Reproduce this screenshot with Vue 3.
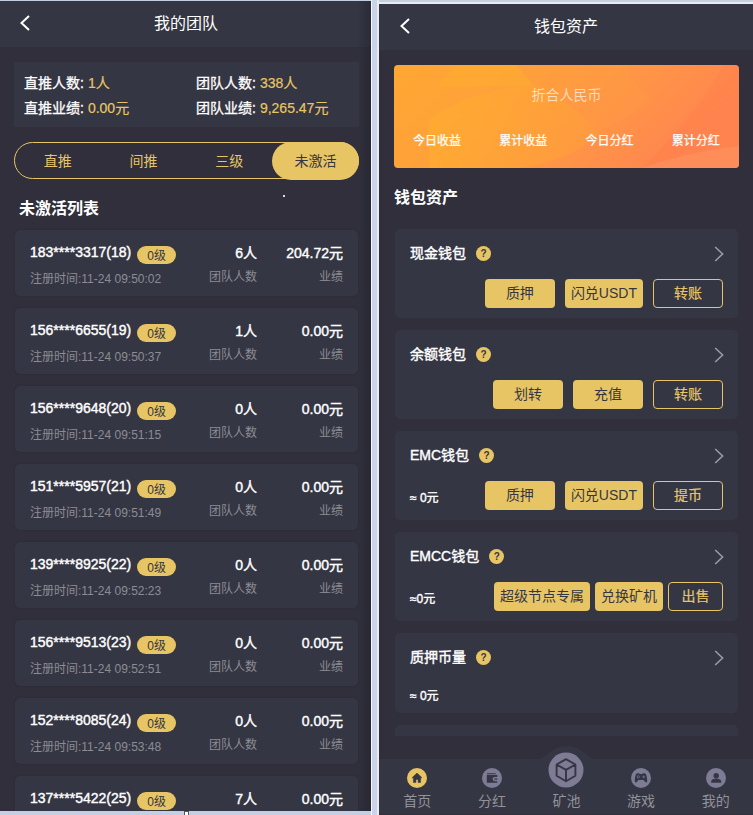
<script setup>
const summary = [
  { label: '直推人数', value: '1人' },
  { label: '团队人数', value: '338人' },
  { label: '直推业绩', value: '0.00元' },
  { label: '团队业绩', value: '9,265.47元' },
]

const tabs = ['直推', '间推', '三级', '未激活']
const activeTab = '未激活'

const members = [
  { id: 18, phone: '183****3317', time: '11-24 09:50:02', team: 6, amount: '204.72' },
  { id: 19, phone: '156****6655', time: '11-24 09:50:37', team: 1, amount: '0.00' },
  { id: 20, phone: '156****9648', time: '11-24 09:51:15', team: 0, amount: '0.00' },
  { id: 21, phone: '151****5957', time: '11-24 09:51:49', team: 0, amount: '0.00' },
  { id: 22, phone: '139****8925', time: '11-24 09:52:23', team: 0, amount: '0.00' },
  { id: 23, phone: '156****9513', time: '11-24 09:52:51', team: 0, amount: '0.00' },
  { id: 24, phone: '152****8085', time: '11-24 09:53:48', team: 0, amount: '0.00' },
  { id: 25, phone: '137****5422', time: '', team: 7, amount: '0.00' },
]

const earnings = ['今日收益', '累计收益', '今日分红', '累计分红']

const wallets = [
  { name: '现金钱包', approx: '', actions: ['质押', '闪兑USDT', '转账'] },
  { name: '余额钱包', approx: '', actions: ['划转', '充值', '转账'] },
  { name: 'EMC钱包', approx: '≈ 0元', actions: ['质押', '闪兑USDT', '提币'] },
  { name: 'EMCC钱包', approx: '≈0元', actions: ['超级节点专属', '兑换矿机', '出售'], tight: true },
  { name: '质押币量', approx: '≈ 0元', actions: [], short: true },
]

const navItems = [
  { key: 'home', label: '首页' },
  { key: 'bonus', label: '分红' },
  { key: 'pool', label: '矿池' },
  { key: 'game', label: '游戏' },
  { key: 'mine', label: '我的' },
]
</script>

<template>
  <main class="board">
    <section class="pane team-pane">
      <header class="bar">
        <svg class="back" width="12" height="18" viewBox="0 0 12 18"><path d="M10 2 2.5 9 10 16" /></svg>
        <h1>我的团队</h1>
      </header>

      <dl class="summary">
        <div v-for="item in summary" :key="item.label">
          <dt>{{ item.label }}:</dt>
          <dd>{{ item.value }}</dd>
        </div>
      </dl>

      <nav class="tabs">
        <span v-for="tab in tabs" :key="tab" :class="['tab', { active: tab === activeTab }]">{{ tab }}</span>
      </nav>

      <div class="list-head">
        <h2>未激活列表</h2>
        <i class="speck"></i>
      </div>

      <div class="member-list">
        <article v-for="member in members" :key="member.id" class="member">
          <div class="who">
            <div class="phone">
              <strong>{{ member.phone }}({{ member.id }})</strong>
              <span class="level">0级</span>
            </div>
            <p v-if="member.time">注册时间:{{ member.time }}</p>
          </div>
          <div class="figure team">
            <strong>{{ member.team }}人</strong>
            <p v-if="member.time">团队人数</p>
          </div>
          <div class="figure amount">
            <strong>{{ member.amount }}元</strong>
            <p v-if="member.time">业绩</p>
          </div>
        </article>
      </div>
    </section>

    <div class="gutter"><i class="handle"></i></div>

    <section class="pane wallet-pane">
      <header class="bar">
        <svg class="back" width="12" height="18" viewBox="0 0 12 18"><path d="M10 2 2.5 9 10 16" /></svg>
        <h1>钱包资产</h1>
      </header>

      <div class="banner">
        <svg class="banner-art" viewBox="0 0 345 103" preserveAspectRatio="none">
          <defs>
            <linearGradient id="base" x1="0" y1="0" x2="1" y2="0.3">
              <stop offset="0" stop-color="#ffa732" />
              <stop offset="0.4" stop-color="#ffa03b" />
              <stop offset="0.75" stop-color="#ff9248" />
              <stop offset="1" stop-color="#ff8550" />
            </linearGradient>
            <linearGradient id="leaf" x1="0" y1="0" x2="1" y2="0">
              <stop offset="0" stop-color="#ffb02c" />
              <stop offset="1" stop-color="#ffa039" />
            </linearGradient>
          </defs>
          <path d="M0 0h345v103H0z" fill="url(#base)" />
          <path d="M44 22Q50 8 62 0h61l16 20Q88 22 44 22z" fill="#ffae2d" opacity=".5" />
          <path d="M35 103V55Q70 28 140 18 180 40 206 68 170 100 120 103z" fill="url(#leaf)" opacity=".5" />
          <path d="M123 0h110q5 20 27 36l-55 32Q180 38 139 20z" fill="#ff9b43" opacity=".3" />
          <path d="M330 0h15v81q-50 5-97 22 50-48 82-103z" fill="#ff7f4c" opacity=".4" />
          <path d="M345 81q-50 5-97 22h97z" fill="#ff8e5c" opacity=".8" />
        </svg>
        <div class="banner-title">折合人民币</div>
        <div class="earnings">
          <span v-for="label in earnings" :key="label">{{ label }}</span>
        </div>
      </div>

      <h2 class="wallet-title">钱包资产</h2>

      <div class="wallet-list">
        <article v-for="wallet in wallets" :key="wallet.name" :class="['wallet', { short: wallet.short }]">
          <div class="wallet-head">
            <strong>{{ wallet.name }}</strong>
            <span class="help">?</span>
            <svg class="more" width="10" height="16" viewBox="0 0 10 16"><path d="M1.2 1 8.6 8l-7.4 7" /></svg>
          </div>
          <div :class="['wallet-foot', { tight: wallet.tight }]">
            <span class="approx">{{ wallet.approx }}</span>
            <span
              v-for="(action, i) in wallet.actions"
              :key="action"
              :class="['btn', { outline: i === wallet.actions.length - 1 }]"
            >{{ action }}</span>
          </div>
        </article>
        <article class="wallet"></article>
      </div>

      <footer class="nav">
        <svg class="hump" width="60" height="15" viewBox="0 0 60 15"><path d="M0 15C10 13 15 1 30 1s20 12 30 14z" /></svg>
        <div v-for="item in navItems" :key="item.key" :class="['nav-item', item.key]">
          <svg v-if="item.key === 'home'" class="icon" viewBox="0 0 20 20">
            <circle class="disc" cx="10" cy="10" r="10" />
            <path class="ink" d="M10 5 5 9.8h1.4v4.7h2.5v-3h2.2v3h2.5V9.8H15z" stroke="#353644" stroke-width=".5" stroke-linejoin="round" />
          </svg>
          <svg v-else-if="item.key === 'bonus'" class="icon" viewBox="0 0 20 20">
            <circle class="disc" cx="10" cy="10" r="10" />
            <path class="ink" d="M5 5.2h8.7v1H5zM4.8 7h10.5v2h-2.6a2 2 0 0 0 0 4.2h2.6v1.5H4.8z" />
            <path class="ink" d="M12.8 10.5h2.5v1.2h-2.5a.6.6 0 0 1 0-1.2z" />
          </svg>
          <svg v-else-if="item.key === 'pool'" class="icon big" viewBox="0 0 36 36">
            <circle class="disc" cx="18" cy="18" r="17.5" />
            <path class="wire" d="M18 7.2 27.4 12.5v11.2L18 29.2 8.6 23.7V12.5zM8.6 12.5 18 17.8l9.4-5.3M18 17.8v11.4" />
          </svg>
          <svg v-else-if="item.key === 'game'" class="icon" viewBox="0 0 20 20">
            <circle class="disc" cx="10" cy="10" r="10" />
            <path class="ink" d="M6.3 5.2h1.6l1 .8h2.2l1-.8h1.6c1.6 0 2.5 4.2 2.5 7.6 0 2.5-1.8 2.3-3.6-.7H7.4c-1.8 3-3.6 3.2-3.6.7 0-3.4.9-7.6 2.5-7.6z" />
            <circle class="disc" cx="7.2" cy="8.9" r="1.4" />
            <circle class="ink" cx="7.2" cy="8.9" r=".8" />
            <path class="disc" d="M12.4 7.6h.7v1h1v.7h-1v1h-.7v-1h-1v-.7h1z" />
          </svg>
          <svg v-else class="icon" viewBox="0 0 20 20">
            <circle class="disc" cx="10" cy="10" r="10" />
            <circle class="ink" cx="10.2" cy="7.7" r="2.7" />
            <path class="ink" d="M5.2 14.8v-1.2c0-2 2-2.6 3.4-2.8h3.2c1.5.2 3.4.8 3.4 2.8v1.2z" />
          </svg>
          <span>{{ item.label }}</span>
        </div>
      </footer>
    </section>
  </main>
</template>

<style>
body { background: #cbd5e7; }
</style>

<style scoped>
.board {
  display: flex;
  width: 753px;
  height: 815px;
  overflow: hidden;
  background: #c3cfe2;
  color: #fff;
  font-family: "Liberation Sans", "Noto Sans CJK SC", sans-serif;
  font-size: 14px;
}
.board * { box-sizing: border-box; }
h1, h2, p, dl, dd { margin: 0; }
strong { font-weight: 400; -webkit-text-stroke: 0.4px currentColor; }
.pane {
  display: flex;
  flex-direction: column;
  overflow: hidden;
  background: #302f3b;
}
.team-pane {
  width: 371px;
  height: 810px;
  margin-top: 1px;
  background: linear-gradient(90deg, transparent 359px, #272834 371px), #302f3b;
}
.bar {
  display: flex;
  align-items: center;
  flex: none;
  height: 46px;
  padding-left: 19px;
  background: #353644;
}
.team-pane .bar { background: linear-gradient(90deg, transparent 357px, #292b38 371px), #353644; }
.back { flex: none; margin-top: -2px; }
.back path { fill: none; stroke: #fff; stroke-width: 2; }
.bar h1 {
  flex: 1;
  padding-right: 32px;
  font-size: 16px;
  font-weight: 400;
  line-height: 24px;
  text-align: center;
}
.team-pane .bar h1 { padding-right: 30px; }

.summary {
  display: grid;
  grid-template-columns: 172px 1fr;
  grid-auto-rows: 25px;
  flex: none;
  width: 345px;
  height: 65px;
  margin: 15px 0 0 14px;
  padding: 9px 10px 0;
  background: #353644;
  line-height: 25px;
}
.summary div { display: flex; gap: 4px; }
.summary dt { -webkit-text-stroke: 0.3px currentColor; }
.summary dd { color: #e7c564; -webkit-text-stroke: 0.2px currentColor; }

.tabs {
  display: flex;
  flex: none;
  width: 345px;
  height: 37px;
  margin: 15px 0 0 14px;
  border: 1px solid #e7c564;
  border-radius: 19px;
}
.tab {
  flex: 1;
  color: #e7c564;
  line-height: 37px;
  text-align: center;
}
.tab.active {
  flex: none;
  width: 87px;
  height: 38px;
  margin: -1px -1px 0 0;
  border-radius: 19px;
  background: #e7c564;
  color: #353644;
  line-height: 39px;
}
.list-head {
  display: flex;
  flex: none;
  height: 51px;
  padding: 18px 0 0 19px;
}
.list-head h2,
.wallet-title {
  font-size: 16px;
  font-weight: 700;
  line-height: 24px;
}
.speck {
  width: 2px;
  height: 2px;
  margin: -2px 0 0 184px;
  background: #ddd;
}

.member-list {
  display: flex;
  flex-direction: column;
  gap: 12px;
  padding-left: 15px;
}
.member {
  display: flex;
  flex: none;
  width: 343px;
  height: 66px;
  padding: 0 15px;
  border-radius: 5px;
  background: #353644;
  box-shadow: 0 0 2px #292934;
}
.who { width: 150px; padding-top: 14px; }
.phone {
  display: flex;
  gap: 6px;
  height: 25px;
  line-height: 17px;
  white-space: nowrap;
}
.level {
  width: 39px;
  height: 18px;
  margin-top: 2px;
  border-radius: 9px;
  background: #e7c564;
  color: #353644;
  font-size: 12px;
  line-height: 20px;
  text-align: center;
}
.member p {
  color: #8c8c93;
  font-size: 12px;
  line-height: 20px;
  white-space: nowrap;
}
.figure { padding-top: 13px; text-align: right; }
.figure strong { display: block; height: 24px; line-height: 20px; }
.figure.team { width: 77px; }
.figure.amount { width: 86px; }

.gutter {
  position: relative;
  width: 8px;
  border-right: 2px solid #ebebed;
  border-left: 1px solid #f8f8fa;
  background: #c9d3e9;
}
.handle {
  position: absolute;
  left: -188px;
  bottom: 0;
  width: 5px;
  height: 4px;
  border: 1px solid #555;
  border-bottom: 0;
  background: #fff;
}

.wallet-pane {
  width: 374px;
  height: 813px;
  margin-top: 2px;
  border-top: 2px solid #ebebed;
}
.wallet-pane .bar { padding-left: 20px; }
.banner {
  position: relative;
  flex: none;
  width: 345px;
  height: 103px;
  margin: 15px 0 0 15px;
  overflow: hidden;
  border-radius: 4px;
}
.banner-art { position: absolute; inset: 0; width: 100%; height: 100%; }
.banner-title {
  position: relative;
  padding-top: 19px;
  color: rgba(255, 255, 255, 0.66);
  line-height: 22px;
  text-align: center;
}
.earnings {
  position: relative;
  display: grid;
  grid-template-columns: repeat(4, 1fr);
  margin-top: 25px;
  font-size: 12px;
  line-height: 20px;
  text-align: center;
  -webkit-text-stroke: 0.25px currentColor;
}
.wallet-title { flex: none; height: 61px; padding: 18px 0 0 15px; }
.wallet-list {
  display: flex;
  flex-direction: column;
  flex: none;
  gap: 12px;
  height: 507px;
  padding-left: 16px;
  overflow: hidden;
}
.wallet {
  flex: none;
  width: 343px;
  height: 89px;
  padding: 14px 15px 0;
  border-radius: 5px;
  background: #353644;
}
.wallet.short { height: 80px; }
.wallet-head {
  display: flex;
  align-items: center;
  height: 22px;
  line-height: 20px;
}
.wallet-head strong { margin-top: -2px; }
.help {
  width: 15px;
  height: 15px;
  margin: -1px 0 0 10px;
  border-radius: 50%;
  background: #e7c564;
  color: #353644;
  font-size: 10px;
  font-weight: 700;
  line-height: 15px;
  text-align: center;
}
.more { margin: -1px -1px 0 auto; }
.more path { fill: none; stroke: #9a9aa3; stroke-width: 1.6; }
.wallet-foot { display: flex; gap: 10px; margin-top: 14px; }
.wallet-foot.tight { gap: 5px; }
.approx {
  flex: 1;
  padding-top: 7px;
  font-size: 12px;
  line-height: 20px;
  -webkit-text-stroke: 0.4px currentColor;
}
.short .approx { padding-top: 3px; }
.btn {
  min-width: 70px;
  height: 29px;
  padding: 0 6px;
  border-radius: 4px;
  background: #e7c564;
  color: #353644;
  line-height: 28px;
  text-align: center;
  white-space: nowrap;
}
.tight .btn { min-width: 55px; }
.btn.outline {
  border: 1px solid #e7c564;
  background: none;
  color: #e7c564;
  line-height: 26px;
  -webkit-text-stroke: 0.2px currentColor;
}

.nav {
  position: relative;
  display: flex;
  flex: none;
  height: 55px;
  margin-top: 23px;
  padding-left: 1px;
  background: #353644;
}
.hump { position: absolute; top: -14px; left: 158px; fill: #353644; }
.nav-item {
  position: relative;
  display: flex;
  flex: 1;
  flex-direction: column;
  align-items: center;
  padding-top: 9px;
  color: #929298;
  line-height: 20px;
}
.nav-item span { margin-top: 3px; }
.icon { flex: none; width: 20px; height: 20px; }
.icon.big { width: 36px; height: 36px; margin-top: -16px; }
.disc { fill: #7d7c94; }
.home .disc { fill: #e7c564; }
.ink { fill: #353644; }
.wire { fill: none; stroke: #353644; stroke-width: 1.9; stroke-linejoin: round; }
</style>
